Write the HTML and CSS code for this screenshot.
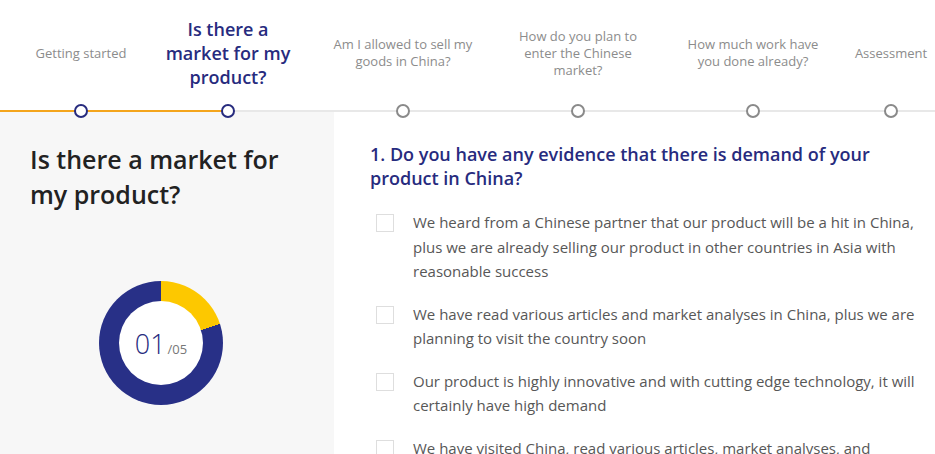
FILE: index.html
```html
<!DOCTYPE html>
<html lang="en">
<head>
<meta charset="utf-8">
<title>Market assessment</title>
<link rel="stylesheet" href="styles.css">
</head>
<body>
<div class="page">
  <nav class="stepper">
    <div class="step done"><div class="label">Getting started</div><span class="dot"></span></div>
    <div class="step current"><div class="label">Is there a market for my product?</div><span class="dot"></span></div>
    <div class="step"><div class="label">Am I allowed to sell my goods in China?</div><span class="dot"></span></div>
    <div class="step"><div class="label">How do you plan to enter the Chinese market?</div><span class="dot"></span></div>
    <div class="step"><div class="label">How much work have you done already?</div><span class="dot"></span></div>
    <div class="step"><div class="label">Assessment</div><span class="dot"></span></div>
  </nav>
  <main class="content">
    <aside class="side">
      <h1 class="side-title">Is there a market for my product?</h1>
      <div class="donut">
        <div class="hole"><span class="num">01</span><span class="total">/05</span></div>
      </div>
    </aside>
    <section class="question">
      <h2 class="q-title">1. Do you have any evidence that there is demand of your product in China?</h2>
      <ul class="options">
        <li class="option"><span class="box"></span><span class="opt-text">We heard from a Chinese partner that our product will be a hit in China, plus we are already selling our product in other countries in Asia with reasonable success</span></li>
        <li class="option"><span class="box"></span><span class="opt-text">We have read various articles and market analyses in China, plus we are planning to visit the country soon</span></li>
        <li class="option"><span class="box"></span><span class="opt-text">Our product is highly innovative and with cutting edge technology, it will certainly have high demand</span></li>
        <li class="option"><span class="box"></span><span class="opt-text">We have visited China, read various articles, market analyses, and</span></li>
      </ul>
    </section>
  </main>
</div>
</body>
</html>
```
FILE: styles.css
```css
* { box-sizing: border-box; }
html, body { margin: 0; padding: 0; }
body {
  font-family: "Open Sans", "Liberation Sans", sans-serif;
  background: #fff;
  width: 935px;
  height: 454px;
  overflow: hidden;
}
.page { width: 935px; }

.stepper {
  display: grid;
  grid-template-columns: 162px 132px 218px 132px 218px 58px;
  height: 112px;
  background:
    linear-gradient(to right, #f4a51c 0, #f4a51c 228px, #e8e8e8 228px) left 110px / 100% 2px no-repeat;
}
.step {
  display: flex;
  flex-direction: column;
  align-items: center;
}
.label {
  height: 104px;
  display: flex;
  align-items: center;
  justify-content: center;
  text-align: center;
  max-width: 140px;
  font-size: 13px;
  line-height: 17px;
  color: #8c8c8c;
  padding-top: 2px;
}
.current .label {
  font-size: 18px;
  line-height: 24px;
  font-weight: 600;
  color: #272b7e;
  max-width: 132px;
}
.dot {
  position: relative;
  z-index: 1;
  width: 14px;
  height: 14px;
  border-radius: 50%;
  border: 2.5px solid #8a8a8a;
  background: #fff;
  margin-bottom: -6px;
}
.done .dot, .current .dot { border-color: #272b7e; }

.content {
  display: grid;
  grid-template-columns: 334px 1fr;
  height: 342px;
  overflow: hidden;
}
.side {
  background: #f7f7f7;
  padding: 30px 30px 0 30px;
}
.side-title {
  margin: 0;
  font-size: 25px;
  line-height: 35px;
  font-weight: 600;
  color: #222;
}
.donut {
  width: 124px;
  height: 124px;
  margin: 69px 0 0 69px;
  border-radius: 50%;
  background: conic-gradient(#fdc800 0deg 72deg, #283087 72deg 360deg);
  display: flex;
  align-items: center;
  justify-content: center;
}
.hole {
  width: 84px;
  height: 84px;
  border-radius: 50%;
  background: #fff;
  display: flex;
  align-items: baseline;
  justify-content: center;
  padding-top: 24px;
}
.num { font-size: 27px; color: #272b7e; font-weight: 300; }
.total { font-size: 13px; color: #777; margin-left: 2px; }

.question {
  padding: 30px 20px 0 36px;
}
.q-title {
  margin: 0 0 20px 0;
  font-size: 18px;
  line-height: 24px;
  font-weight: 600;
  color: #272b7e;
}
.options { list-style: none; margin: 0; padding: 0; }
.option {
  display: flex;
  align-items: flex-start;
  margin-bottom: 18px;
}
.box {
  flex: none;
  width: 18px;
  height: 18px;
  border: 1px solid #dedede;
  background: #fff;
  margin: 4px 19px 0 6px;
}
.opt-text {
  font-size: 15px;
  line-height: 24.5px;
  color: #575757;
}
```
